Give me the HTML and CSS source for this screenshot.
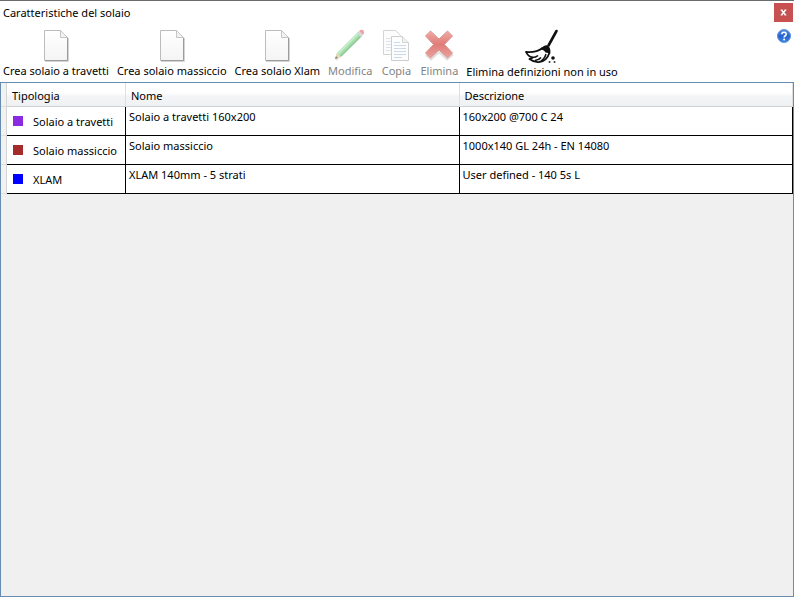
FILE: index.html
```html
<!DOCTYPE html>
<html lang="it">
<head>
<meta charset="utf-8">
<title>Caratteristiche del solaio</title>
<link rel="stylesheet" href="styles.css">
</head>
<body>
<svg class="defs" aria-hidden="true">
  <defs>
    <linearGradient id="paper" x1="0" y1="0" x2="0" y2="1">
      <stop offset="0" stop-color="#fff"/><stop offset="1" stop-color="#f4f4f4"/>
    </linearGradient>
    <linearGradient id="red" x1="0" y1="0" x2="0" y2="1">
      <stop offset="0" stop-color="#f0aba7"/><stop offset="0.5" stop-color="#df7c78"/><stop offset="1" stop-color="#eba29e"/>
    </linearGradient>
    <linearGradient id="blue" x1="0" y1="0" x2="0" y2="1">
      <stop offset="0" stop-color="#5a94e8"/><stop offset="0.5" stop-color="#2561cc"/><stop offset="1" stop-color="#3f86e6"/>
    </linearGradient>
    <symbol id="page" viewBox="0 0 32 33">
      <path d="M5 32.500H28.500V9" fill="none" stroke="#d4d4d4" stroke-width="1"/>
      <path d="M4.500 1.500H20.500L27.500 8.500V31.500H4.500Z" fill="url(#paper)" stroke="#bcbcbc"/>
      <path d="M5 31.500H27.500V9" fill="none" stroke="#9c9c9c"/>
      <path d="M20.500 1.500V8.500H27.500Z" fill="#f2f2f2" stroke="#c6c6c6"/>
    </symbol>
  </defs>
</svg>
<main class="window">
  <header class="titlebar">
    <h1 class="title">Caratteristiche del solaio</h1>
    <button class="close" type="button" aria-label="Chiudi">
      <svg width="7" height="7" viewBox="0 0 7 7"><path d="M1.500 1L5.500 6M5.500 1L1.500 6" stroke="#fff" stroke-width="1.500"/><path d="M0.500 1H2.500M4.500 1H6.500M0.500 6H2.500M4.500 6H6.500" stroke="#fff" stroke-width="0.800"/></svg>
    </button>
  </header>
  <div class="bar">
    <div class="toolbar" role="toolbar">
      <button class="tool" type="button"><svg class="icon" viewBox="0 0 32 33"><use href="#page" width="32" height="33"/></svg><span>Crea solaio a travetti</span></button>
      <button class="tool" type="button"><svg class="icon" viewBox="0 0 32 33"><use href="#page" width="32" height="33"/></svg><span>Crea solaio massiccio</span></button>
      <button class="tool" type="button"><svg class="icon" viewBox="0 0 32 33"><use href="#page" width="32" height="33"/></svg><span>Crea solaio Xlam</span></button>
      <button class="tool" type="button" disabled>
        <svg class="icon" viewBox="0 0 32 33">
          <path d="M2 31L25 9" stroke="#e3e3e3" stroke-width="2"/>
          <path d="M1 30L3 24L24 3L28 7L7 27Z" fill="#a6dfae"/>
          <path d="M3 24L24 3L25.500 4.500L4.500 25.500Z" fill="#c5edc8"/>
          <path d="M6 27L27 6L28 7L7 28Z" fill="#8fc897"/>
          <path d="M1 30L3 24L7 28Z" fill="#ead9b4"/>
          <path d="M1 30L2 27L4 29Z" fill="#888"/>
          <path d="M23 4L25 2L29 6L27 8Z" fill="#d4d8dc"/>
          <path d="M25 2Q27 0 29 1Q31 3 29 6Z" fill="#eda3a0"/>
        </svg><span>Modifica</span></button>
      <button class="tool" type="button" disabled>
        <svg class="icon" viewBox="0 0 32 33">
          <path d="M3.500 1.500H15.500L20.500 6.500V25.500H3.500Z" fill="#fcfcfc" stroke="#d4d4d4"/>
          <path d="M6 9.500H11M6 12.500H11M6 15.500H11M6 18.500H11M6 21.500H11" stroke="#dce3ec"/>
          <path d="M11.500 7.500H22.500L28.500 13.500V31.500H11.500Z" fill="#fdfdfd" stroke="#cecece"/>
          <path d="M22.500 7.500V13.500H28.500" fill="#f2f2f2" stroke="#d4d4d4"/>
          <path d="M14 13.500H20M14 16.500H26M14 19.500H26M14 22.500H26M14 25.500H26M14 28.500H22" stroke="#cbd9ea"/>
        </svg><span>Copia</span></button>
      <button class="tool" type="button" disabled>
        <svg class="icon" viewBox="0 0 32 33">
          <path d="M3 26L8 30.500L16 23L24 30.500L30 25.500" fill="none" stroke="#dedede" stroke-width="2"/>
          <path d="M7.500 2L16 10L24.500 2L29.500 7L21.500 15.500L29.500 24L24.500 29L16 21L7.500 29L2.500 24L10.500 15.500L2.500 7Z" fill="url(#red)" stroke="#dd9894" stroke-linejoin="round"/>
        </svg><span>Elimina</span></button>
      <button class="tool" type="button">
        <svg class="icon broom" viewBox="0 0 34 34">
          <path d="M31.500 2L23.500 16.500" stroke="#111" stroke-width="2.600" stroke-linecap="round"/>
          <path d="M17.500 19Q11 24 1 23Q3 27.500 7.500 28.500Q6 30 4.500 30Q9 33.500 14 33Q22 32 24.300 24" fill="#fff" stroke="#111" stroke-width="1.800" stroke-linejoin="round"/>
          <path d="M7.500 28.500Q11 28.500 13 26.500M10 31.500Q14 31 16 28.500M16 32Q19.500 30 21 25" fill="none" stroke="#111" stroke-width="1.500"/>
          <path d="M15 20.500Q19.500 15.500 22.500 16.500Q26.500 19 25 25.500Q23.500 23.500 20.500 23.500Q19 20.500 15 20.500Z" fill="#111"/>
          <circle cx="28" cy="29" r="1.800" fill="#111"/><circle cx="24.500" cy="33" r="1" fill="#333"/><circle cx="29.500" cy="33" r="1" fill="#333"/>
        </svg><span>Elimina definizioni non in uso</span></button>
    </div>
    <button class="help" type="button" aria-label="Aiuto">
      <svg width="14" height="14" viewBox="0 0 14 14"><circle cx="7" cy="7" r="6.500" fill="url(#blue)" stroke="#5f91dc"/><path d="M4.800 5.300Q4.900 3.300 7 3.300Q9.200 3.300 9.200 5.200Q9.200 6.300 8 7Q7.100 7.500 7.100 8.600" fill="none" stroke="#fff" stroke-width="1.500"/><circle cx="7.100" cy="10.600" r="1" fill="#fff"/></svg>
    </button>
  </div>
  <section class="panel">
    <table class="grid">
      <colgroup><col class="c-mark"><col class="c-type"><col><col></colgroup>
      <thead>
        <tr><td class="mark"></td><th scope="col">Tipologia</th><th scope="col">Nome</th><th scope="col">Descrizione</th></tr>
      </thead>
      <tbody>
        <tr><td class="mark"></td><td class="type"><span class="swatch violet"></span>Solaio a travetti</td><td>Solaio a travetti 160x200</td><td>160x200 @700 C 24</td></tr>
        <tr><td class="mark"></td><td class="type"><span class="swatch brown"></span>Solaio massiccio</td><td>Solaio massiccio</td><td>1000x140 GL 24h - EN 14080</td></tr>
        <tr><td class="mark"></td><td class="type"><span class="swatch blue"></span>XLAM</td><td>XLAM 140mm - 5 strati</td><td>User defined - 140 5s L</td></tr>
      </tbody>
    </table>
  </section>
</main>
</body>
</html>
```
FILE: styles.css
```css
* { box-sizing: border-box; }

body {
  margin: 0;
  background: #fff;
  color: #000;
  font: 11px/16px "Noto Sans", "Open Sans", sans-serif;
}

.defs { position: absolute; width: 0; height: 0; }

.window {
  display: flex;
  flex-direction: column;
  min-height: 100vh;
  border-top: 1px solid #6c6c6c;
}

.titlebar {
  display: flex;
  justify-content: space-between;
  align-items: center;
  height: 23px;
  padding: 0 1px 0 3px;
}

.title { margin: 0; font-size: 11px; font-weight: 400; }

button {
  padding: 0;
  border: 0;
  background: none;
  color: inherit;
  font: inherit;
}

.close {
  display: flex;
  align-items: center;
  justify-content: center;
  width: 19px;
  height: 19px;
  background: #c75050;
}

.bar {
  display: flex;
  justify-content: space-between;
  align-items: flex-start;
  height: 58px;
  padding: 5px 3px 0;
}

.toolbar { display: flex; gap: 8px; }

.tool {
  display: flex;
  flex-direction: column;
  align-items: center;
  gap: 1px;
  white-space: nowrap;
}

.tool:disabled { color: #838383; }

.icon { width: 32px; height: 33px; }
.broom { width: 34px; height: 34px; }

.help { display: flex; }

.panel {
  flex: 1;
  border: 1px solid #688caf;
  background: #f0f0f0;
}

.grid {
  width: 100%;
  table-layout: fixed;
  border-collapse: separate;
  border-spacing: 0;
}

.c-mark { width: 6px; }
.c-type { width: 119px; }

th {
  height: 24px;
  padding: 2px 5px 0;
  border-right: 1px solid #dedfe1;
  border-bottom: 1px solid #d0d1d3;
  background: linear-gradient(#fff 40%, #f3f4f6 60%, #f0f1f3);
  font-weight: 400;
  text-align: left;
}

tbody td {
  height: 29px;
  padding: 2px 3px;
  border-right: 1px solid #000;
  border-bottom: 1px solid #000;
  background: #fff;
  vertical-align: top;
  white-space: nowrap;
}

.grid .mark {
  padding: 0;
  border-right: 1px solid #d5d5d5;
  border-bottom: 1px solid #dedede;
  background: #f2f2f2;
}

.grid .type {
  padding: 2px 6px 0;
  vertical-align: middle;
}

.swatch {
  display: inline-block;
  width: 10px;
  height: 10px;
  margin-right: 10px;
}

.violet { background: #8a2be2; }
.brown { background: #a52a2a; }
.blue { background: #00f; }
```
